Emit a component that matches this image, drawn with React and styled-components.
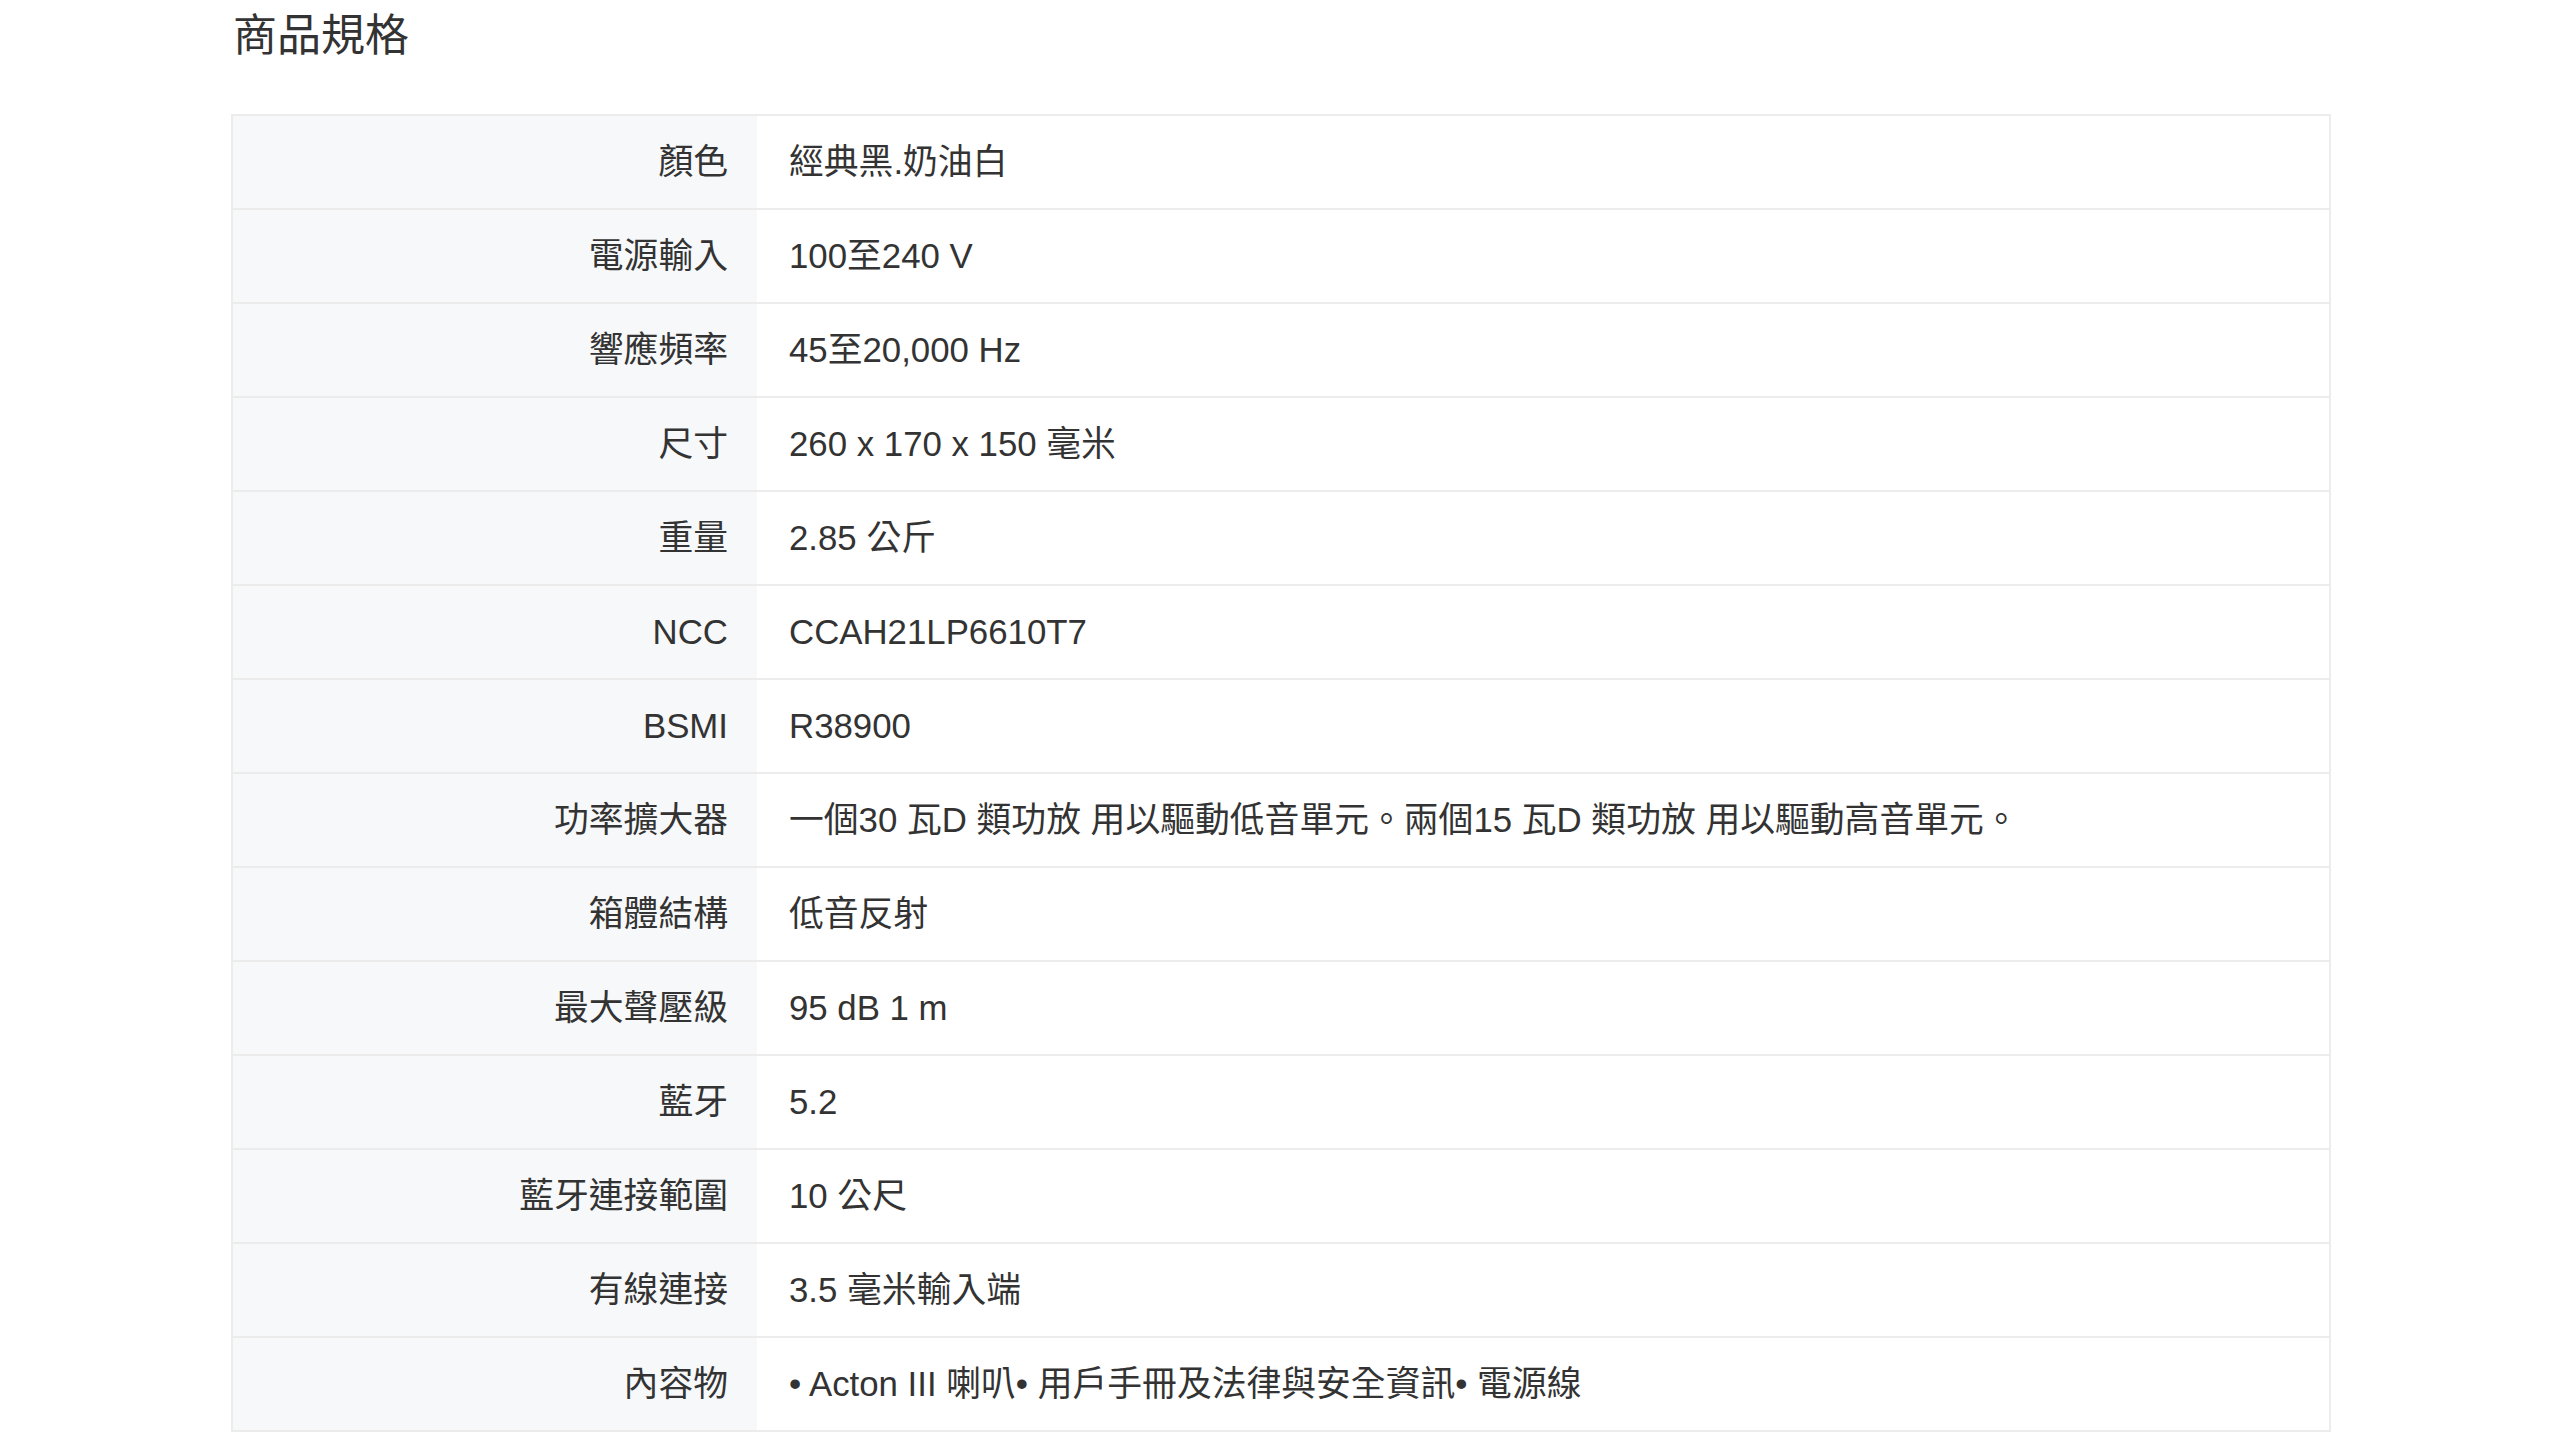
import React from 'react';
import styled, { createGlobalStyle } from 'styled-components';

const GlobalStyle = createGlobalStyle`
  body {
    margin: 0;
    background: #ffffff;
    font-family: "Liberation Sans", "Noto Sans CJK TC", sans-serif;
    color: #333333;
  }
`;

// spec rows shown in the table
const specs = [
  { label: '顏色', value: '經典黑.奶油白' },
  { label: '電源輸入', value: '100至240 V' },
  { label: '響應頻率', value: '45至20,000 Hz' },
  { label: '尺寸', value: '260 x 170 x 150 毫米' },
  { label: '重量', value: '2.85 公斤' },
  { label: 'NCC', value: 'CCAH21LP6610T7' },
  { label: 'BSMI', value: 'R38900' },
  { label: '功率擴大器', value: '一個30 瓦D 類功放 用以驅動低音單元。兩個15 瓦D 類功放 用以驅動高音單元。' },
  { label: '箱體結構', value: '低音反射' },
  { label: '最大聲壓級', value: '95 dB 1 m' },
  { label: '藍牙', value: '5.2' },
  { label: '藍牙連接範圍', value: '10 公尺' },
  { label: '有線連接', value: '3.5 毫米輸入端' },
  { label: '內容物', value: '• Acton III 喇叭• 用戶手冊及法律與安全資訊• 電源線' },
];

const SpecSection = styled.section`
  width: 2100px;
  margin-left: 231px;
`;

const Title = styled.h2`
  margin: 0 0 52px 2px;
  padding-top: 10px;
  font-size: 44px;
  line-height: 52px;
  font-weight: 400;
  color: #333333;
`;

const SpecTable = styled.table`
  width: 100%;
  border-collapse: collapse;
  border: 2px solid #ececec;
  font-size: 34.8px;
  line-height: 40px;
`;

const Row = styled.tr`
  height: 94px;
  border-bottom: 2px solid #ececec;
`;

const LabelCell = styled.th`
  width: 495px;
  padding: 0 29px 0 0;
  background: #f7f8fa;
  text-align: right;
  font-weight: 400;
  color: #333333;
  white-space: nowrap;
`;

const ValueCell = styled.td`
  padding: 0 0 0 32px;
  text-align: left;
  color: #333333;
  white-space: nowrap;
`;

export default function App() {
  return (
    <>
      <GlobalStyle />
      <SpecSection>
        <Title>商品規格</Title>
        <SpecTable>
          <tbody>
            {specs.map((s) => (
              <Row key={s.label}>
                <LabelCell>{s.label}</LabelCell>
                <ValueCell>{s.value}</ValueCell>
              </Row>
            ))}
          </tbody>
        </SpecTable>
      </SpecSection>
    </>
  );
}
